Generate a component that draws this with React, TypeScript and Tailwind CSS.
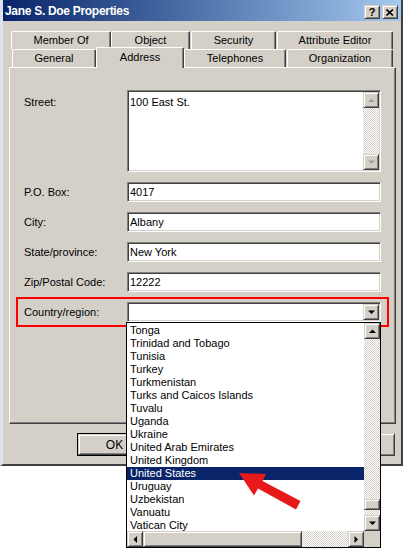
import React from "react";

const raised =
  "bg-[#d4d0c8] border border-t-[#d4d0c8] border-l-[#d4d0c8] border-r-[#404040] border-b-[#404040] shadow-[inset_1px_1px_0_#ffffff,inset_-1px_-1px_0_#808080]";
const sunken =
  "bg-white border border-t-[#808080] border-l-[#808080] border-r-white border-b-white shadow-[inset_1px_1px_0_#404040,inset_-1px_-1px_0_#d4d0c8]";
const checker =
  "bg-[image:repeating-conic-gradient(#d4d0c8_0_25%,#ffffff_0_50%)] bg-[length:2px_2px]";

function Arrow({ dir, gray }: { dir: "up" | "down" | "left" | "right"; gray?: boolean }) {
  const pts: Record<string, string> = {
    up: "0,4 7,4 3.5,0.5",
    down: "0,0.5 7,0.5 3.5,4",
    left: "4,0 4,7 0.5,3.5",
    right: "0.5,0 0.5,7 4,3.5",
  };
  const horiz = dir === "left" || dir === "right";
  return (
    <svg width={horiz ? 5 : 7} height={horiz ? 7 : 5} viewBox={horiz ? "0 0 5 7" : "0 0 7 5"}>
      <polygon points={pts[dir]} fill={gray ? "#a0a0a0" : "#000000"} />
    </svg>
  );
}

function SBtn({ dir, gray, className }: { dir: "up" | "down" | "left" | "right"; gray?: boolean; className: string }) {
  return (
    <div className={`${raised} ${className} flex items-center justify-center shrink-0`}>
      <Arrow dir={dir} gray={gray} />
    </div>
  );
}

function Tab({ label, className, selected }: { label: string; className: string; selected?: boolean }) {
  return (
    <div
      className={`${className} bg-[#d4d0c8] border-t border-l border-t-white border-l-white border-r border-r-[#404040] rounded-tl-[2px] rounded-tr-[2px] shadow-[inset_-1px_0_0_#808080] flex items-center justify-center shrink-0 ${
        selected ? "h-[21px] relative top-[1px] z-10 pb-[2px]" : "h-[18px]"
      }`}
    >
      {label}
    </div>
  );
}

function Field({ label, value }: { label: string; value: string }) {
  return (
    <div className="flex items-center h-[20px] mt-[10px]">
      <div className="w-[103px]">{label}</div>
      <div className={`${sunken} w-[254px] h-[20px] pl-[2px] flex items-center`}>{value}</div>
    </div>
  );
}

function Btn({ label, def }: { label?: string; def?: boolean }) {
  return (
    <div className={`w-[75px] h-[23px] ${def ? "border border-black" : ""}`}>
      <div className={`${raised} w-full h-full flex items-center justify-center text-[12px]`}>{label}</div>
    </div>
  );
}

const countries = [
  "Tonga",
  "Trinidad and Tobago",
  "Tunisia",
  "Turkey",
  "Turkmenistan",
  "Turks and Caicos Islands",
  "Tuvalu",
  "Uganda",
  "Ukraine",
  "United Arab Emirates",
  "United Kingdom",
  "United States",
  "Uruguay",
  "Uzbekistan",
  "Vanuatu",
  "Vatican City",
];

export default function App() {
  return (
    <div className="relative w-[404px] h-[548px] bg-white overflow-hidden font-['Liberation_Sans',Arial,sans-serif] text-[11px] text-black">
      {/* window */}
      <div className="w-[403px] h-[466px] bg-[#d4d0c8] border-l-[3px] border-l-[#dde3ec] border-r-2 border-r-[#404040] border-b-2 border-b-[#404040] flex flex-col">
        {/* title bar */}
        <div className="h-[21px] bg-linear-to-r from-[#0a246a] to-[#a6caf0] flex items-center justify-between pl-[2px] pr-[3px] shrink-0">
          <span className="text-white font-bold text-[12px] tracking-[-0.3px]">Jane S. Doe Properties</span>
          <div className="flex gap-[2px] mt-[3px]">
            <div className={`${raised} w-[16px] h-[14px] flex items-center justify-center font-bold text-[11px] leading-none`}>?</div>
            <div className={`${raised} w-[16px] h-[14px] flex items-center justify-center`}>
              <svg width="8" height="7" viewBox="0 0 8 7">
                <path d="M0.5 0.5 L7 6.5 M7 0.5 L0.5 6.5" stroke="#000" strokeWidth="1.6" />
              </svg>
            </div>
          </div>
        </div>

        {/* tab row 1 */}
        <div className="flex h-[18px] mt-[10px] pl-[8px]">
          <Tab label="Member Of" className="w-[100px]" />
          <Tab label="Object" className="w-[79px]" />
          <Tab label="Security" className="w-[85px] ml-[1px]" />
          <Tab label="Attribute Editor" className="w-[116px] ml-[1px]" />
        </div>
        {/* tab row 2 */}
        <div className="flex items-end h-[18px] pl-[9px]">
          <Tab label="General" className="w-[84px]" />
          <Tab label="Address" className="w-[88px]" selected />
          <Tab label="Telephones" className="w-[102px]" />
          <Tab label="Organization" className="w-[106px] ml-[1px]" />
        </div>

        {/* panel */}
        <div className="ml-[6px] w-[387px] h-[357px] border-t border-l border-t-white border-l-white border-r border-b border-r-[#404040] border-b-[#404040] shadow-[inset_-1px_-1px_0_#808080] pt-[22px] pl-[14px] shrink-0">
          <div className="flex">
            <div className="w-[103px] pt-[4px]">Street:</div>
            <div className={`${sunken} w-[254px] h-[82px] flex p-[1px]`}>
              <div className="flex-1 pl-[1px] pt-[2px]">100 East St.</div>
              <div className="w-[16px] flex flex-col">
                <SBtn dir="up" gray className="h-[16px] w-[16px]" />
                <div className={`flex-1 ${checker}`} />
                <SBtn dir="down" gray className="h-[16px] w-[16px]" />
              </div>
            </div>
          </div>
          <Field label="P.O. Box:" value="4017" />
          <Field label="City:" value="Albany" />
          <Field label="State/province:" value="New York" />
          <Field label="Zip/Postal Code:" value="12222" />
          <div className="flex items-center h-[20px] mt-[10px]">
            <div className="w-[103px]">Country/region:</div>
            <div className={`${sunken} w-[254px] h-[20px] p-[1px] flex justify-end`}>
              <SBtn dir="down" className="h-[16px] w-[16px]" />
            </div>
          </div>
        </div>

        {/* buttons */}
        <div className="flex gap-[6px] ml-[74px] mt-[9px]">
          <Btn label="OK" def />
          <Btn />
          <Btn />
          <Btn />
        </div>
      </div>

      {/* red highlight */}
      <div className="absolute left-[16px] top-[297px] w-[373px] h-[30px] border-2 border-[#ff0000]" />

      {/* dropdown list */}
      <div className="absolute left-[126px] top-[322px] w-[255px] h-[226px] border border-black bg-white flex flex-col">
        <div className="flex h-[208px]">
          <div className="flex-1 flex flex-col pt-[1px]">
            {countries.map((c) => (
              <div
                key={c}
                className={`h-[13px] leading-[13px] pl-[3px] whitespace-nowrap ${
                  c === "United States" ? "bg-[#0a246a] text-white" : ""
                }`}
              >
                {c}
              </div>
            ))}
          </div>
          <div className="w-[16px] flex flex-col">
            <SBtn dir="up" className="h-[16px] w-[16px]" />
            <div className={`flex-1 ${checker}`} />
            <div className={`${raised} h-[11px] w-[16px]`} />
            <div className={`h-[5px] ${checker}`} />
            <SBtn dir="down" className="h-[16px] w-[16px]" />
          </div>
        </div>
        <div className="flex h-[16px]">
          <SBtn dir="left" className="h-[16px] w-[16px]" />
          <div className={`${raised} h-[16px] w-[159px]`} />
          <div className={`flex-1 ${checker}`} />
          <SBtn dir="right" className="h-[16px] w-[16px]" />
          <div className="w-[16px] bg-[#d4d0c8]" />
        </div>
      </div>

      {/* red arrow */}
      <svg className="absolute left-0 top-0 pointer-events-none" width="404" height="548">
        <polygon
          points="239,473 266,474 262.5,481 300.5,501 296,509.5 258,488.5 254,495.5"
          fill="#e8191b"
        />
      </svg>
    </div>
  );
}
